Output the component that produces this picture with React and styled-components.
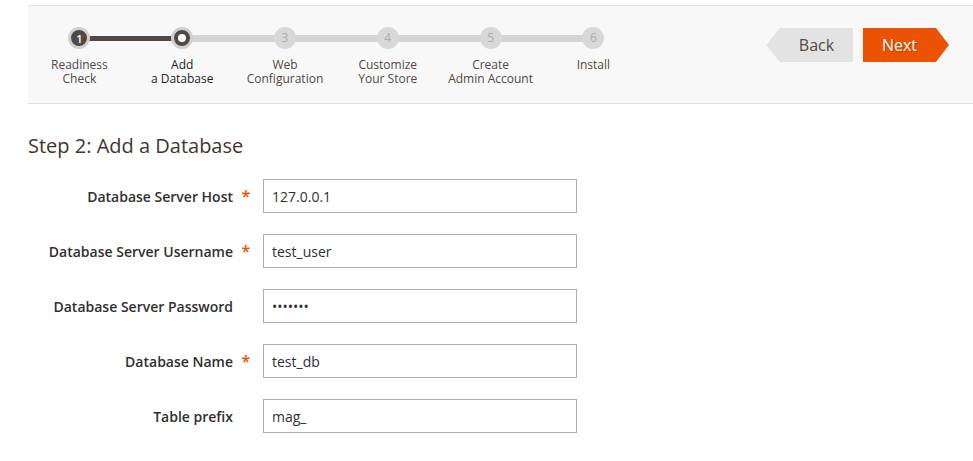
import React from "react";
import styled, { createGlobalStyle, css } from "styled-components";

const GlobalStyle = createGlobalStyle`
  body {
    margin: 0;
    background: #ffffff;
    font-family: "Open Sans", "Liberation Sans", sans-serif;
  }
`;

const steps = [
  { num: 1, label: ["Readiness", "Check"], state: "done" },
  { num: 2, label: ["Add", "a Database"], state: "active" },
  { num: 3, label: ["Web", "Configuration"], state: "todo" },
  { num: 4, label: ["Customize", "Your Store"], state: "todo" },
  { num: 5, label: ["Create", "Admin Account"], state: "todo" },
  { num: 6, label: ["Install"], state: "todo" },
];

const fields = [
  { label: "Database Server Host", value: "127.0.0.1", required: true },
  { label: "Database Server Username", value: "test_user", required: true },
  { label: "Database Server Password", value: "1234567", type: "password" },
  { label: "Database Name", value: "test_db", required: true },
  { label: "Table prefix", value: "mag_" },
];

const App = () => {
  return (
    <Page>
      <GlobalStyle />
      <Header>
        <Nav>
          {steps.map((step, i) => (
            <Step key={step.num} $first={i === 0} $state={step.state}>
              <Circle $state={step.state}>
                {step.state === "active" ? <Dot /> : step.num}
              </Circle>
              <StepLabel $active={step.state === "active"}>
                {step.label[0]}
                {step.label[1] && (
                  <>
                    <br />
                    {step.label[1]}
                  </>
                )}
              </StepLabel>
            </Step>
          ))}
        </Nav>
        <Actions>
          <BackButton>Back</BackButton>
          <NextButton>Next</NextButton>
        </Actions>
      </Header>

      <Title>Step 2: Add a Database</Title>

      <Form>
        {fields.map((field) => (
          <Row key={field.label}>
            <Label>{field.label}</Label>
            <Required>{field.required ? "*" : ""}</Required>
            <Input
              type={field.type || "text"}
              value={field.value}
              readOnly
            />
          </Row>
        ))}
      </Form>
    </Page>
  );
};

const Page = styled.div`
  padding: 5px 0 40px 28px;
`;

const Header = styled.div`
  height: 97px;
  background: #f8f8f8;
  border-top: 1px solid #e3e3e3;
  border-bottom: 1px solid #e3e3e3;
  display: flex;
  justify-content: space-between;
  padding-right: 24px;
`;

const Nav = styled.div`
  display: flex;
  padding-top: 21px;
`;

const Step = styled.div`
  position: relative;
  width: 102.8px;
  display: flex;
  flex-direction: column;
  align-items: center;

  ${(p) =>
    !p.$first &&
    css`
      &::before {
        content: "";
        position: absolute;
        left: -50%;
        width: 100%;
        top: ${p.$state === "active" ? "9px" : "8px"};
        height: ${p.$state === "active" ? "5px" : "7px"};
        background: ${p.$state === "active" ? "#514943" : "#d4d4d4"};
        z-index: 0;
      }
    `}
`;

const Circle = styled.div`
  position: relative;
  z-index: 1;
  width: 22px;
  height: 22px;
  border-radius: 50%;
  display: flex;
  align-items: center;
  justify-content: center;
  font-size: 12px;
  line-height: 1;
  background: #d8d8d8;
  color: #adadad;
  box-sizing: border-box;

  ${(p) =>
    p.$state !== "todo" &&
    css`
      border: 3px solid #d0d0d0;
      background: #514943;
      color: #ffffff;
      font-weight: 600;
      font-size: 11px;
    `}
`;

const Dot = styled.span`
  width: 8px;
  height: 8px;
  border-radius: 50%;
  background: #ffffff;
`;

const StepLabel = styled.div`
  margin-top: 9px;
  font-size: 12px;
  line-height: 14px;
  text-align: center;
  white-space: nowrap;
  color: ${(p) => (p.$active ? "#1f1f1f" : "#514943")};
`;

const Actions = styled.div`
  display: flex;
  gap: 10px;
  padding-top: 22px;
`;

const ButtonBase = styled.button`
  height: 34px;
  border: none;
  font-family: inherit;
  font-size: 16px;
  cursor: pointer;
  display: flex;
  align-items: center;
  justify-content: center;
`;

const BackButton = styled(ButtonBase)`
  width: 87px;
  padding: 0 0 0 14px;
  background: #e3e3e3;
  color: #514943;
  clip-path: polygon(14px 0, 100% 0, 100% 100%, 14px 100%, 0 50%);
`;

const NextButton = styled(ButtonBase)`
  width: 86px;
  padding: 0 13px 0 0;
  background: #eb5202;
  color: #ffffff;
  text-shadow: 1px 1px 0 rgba(0, 0, 0, 0.25);
  clip-path: polygon(0 0, calc(100% - 13px) 0, 100% 50%, calc(100% - 13px) 100%, 0 100%);
`;

const Title = styled.h2`
  margin: 30px 0 21px;
  font-size: 20px;
  font-weight: 400;
  line-height: 24px;
  color: #41362f;
`;

const Form = styled.div`
  display: flex;
  flex-direction: column;
  gap: 21px;
`;

const Row = styled.div`
  display: grid;
  grid-template-columns: 205px 30px 314px;
  align-items: center;
`;

const Label = styled.label`
  text-align: right;
  font-size: 14px;
  font-weight: 600;
  color: #303030;
  white-space: nowrap;
`;

const Required = styled.span`
  text-align: center;
  font-size: 16px;
  font-weight: 600;
  color: #eb5202;
  padding-right: 4px;
`;

const Input = styled.input`
  box-sizing: border-box;
  width: 314px;
  height: 34px;
  border: 1px solid #adadad;
  padding: 0 8px;
  font-family: inherit;
  font-size: 14px;
  color: #303030;
  background: #ffffff;
  outline: none;
`;

export default App;
